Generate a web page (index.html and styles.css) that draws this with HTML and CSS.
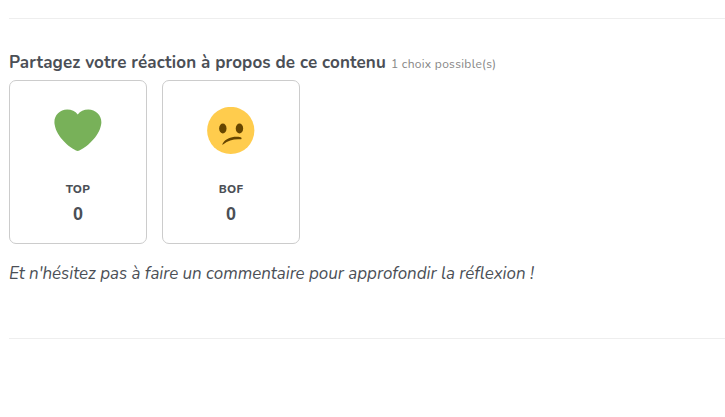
FILE: index.html
```html
<!DOCTYPE html>
<html lang="fr">
<head>
    <meta charset="UTF-8">
    <meta name="viewport" content="width=device-width, initial-scale=1.0">
    <title>Partagez votre réaction</title>
    <link rel="stylesheet" href="styles.css">
</head>

<body>
    <section class="reactions">
        <div class="header">
            <h2>Partagez votre réaction à propos de ce contenu</h2>
            <small class="hint">1 choix possible(s)</small>
        </div>

        <div class="choices">
            <button type="button" class="choice">
                <svg class="emoji" viewBox="0 0 36 36" aria-hidden="true">
                    <path fill="#78B159" d="M35.9 11.5c0-5.3-4.400-9.600-9.900-9.600-3.300 0-6.200 1.300-8 3.700-1.800-2.400-4.700-3.700-8-3.700-5.500 0-9.700 4.300-9.700 9.600 0 .8.1 1.600.3 2.300C2 22.200 11.300 30.900 18 33.400c6.700-2.500 16.100-11.200 17.600-19.600.2-.7.300-1.500.3-2.300z"/>
                </svg>
                <span class="label">TOP</span>
                <span class="count">0</span>
            </button>
            <button type="button" class="choice">
                <svg class="emoji" viewBox="0 0 36 36" aria-hidden="true">
                    <circle fill="#FFCC4D" cx="18" cy="17.800" r="17.900"/>
                    <ellipse fill="#664500" cx="12" cy="16.3" rx="2.8" ry="3.8"/>
                    <ellipse fill="#664500" cx="24.6" cy="16.3" rx="2.8" ry="3.8"/>
                    <path fill="#664500" d="M11.700 28.600c-.2-.2-.1-.5.1-.8 2.400-4.400 8.400-5.900 13.600-4.900.6.100.9.500.8 1-.1.600-.6.700-1.100.6-4.800-.3-9 .7-12.700 3.800-.300.300-.500.400-.7.300z"/>
                </svg>
                <span class="label">BOF</span>
                <span class="count">0</span>
            </button>
        </div>

        <p class="invite">Et n'hésitez pas à faire un commentaire pour approfondir la réflexion !</p>
    </section>
</body>

</html>
```

FILE: styles.css
```css
body {
    margin: 0;
    background-color: #fff;
    color: #4b4f56;
    font-family: Nunito, "Open Sans", sans-serif;
}

.reactions {
    box-sizing: border-box;
    height: 321px;
    margin: 18px 0 0 9px;
    padding-top: 31px;
    border-top: 1px solid #eee;
    border-bottom: 1px solid #eee;
}

.header {
    display: flex;
    align-items: baseline;
    gap: 5px;
    height: 30px;
    line-height: 26px;
    white-space: nowrap;
}

h2 {
    margin: 0;
    font-size: 17px;
    font-weight: 700;
    letter-spacing: 0.13px;
}

.hint {
    color: #868686;
    font-size: 12px;
    letter-spacing: 0.3px;
}

.choices {
    display: flex;
    gap: 15px;
}

.choice {
    display: flex;
    flex-direction: column;
    align-items: center;
    box-sizing: border-box;
    width: 138px;
    height: 164px;
    padding: 26px 0 0;
    border: 1px solid #ccc;
    border-radius: 7px;
    background-color: #fff;
    color: inherit;
    font-family: inherit;
    font-weight: 700;
    cursor: pointer;
}

.emoji {
    width: 47.5px;
    height: 47.5px;
}

.label {
    margin-top: 25px;
    font-size: 11.5px;
    font-weight: 800;
    line-height: 18px;
    letter-spacing: 0.3px;
}

.count {
    margin-top: 4px;
    font-family: "Liberation Sans", Arial, sans-serif;
    font-size: 18px;
    line-height: 24px;
}

.invite {
    margin: 17px 0 0;
    font-size: 17px;
    font-style: italic;
    font-weight: 400;
    line-height: 26px;
    letter-spacing: -0.03px;
    white-space: nowrap;
}
```
